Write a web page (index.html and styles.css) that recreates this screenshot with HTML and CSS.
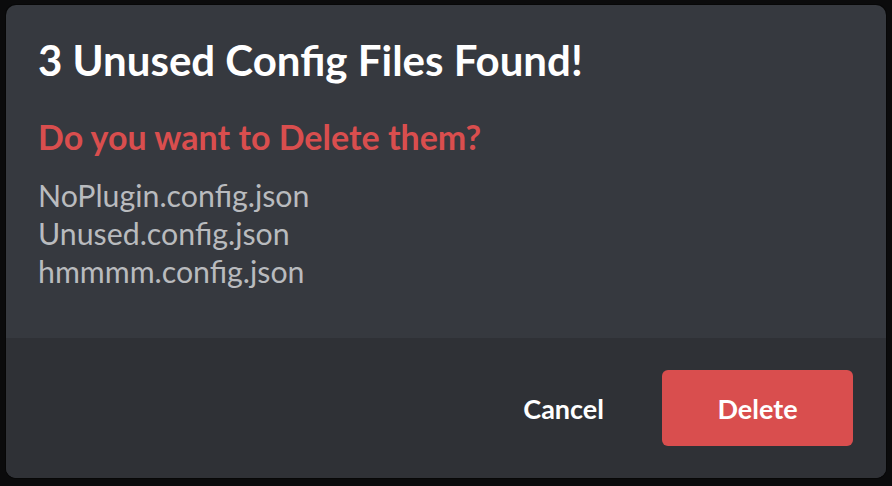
FILE: index.html
```html
<!DOCTYPE html>
<html lang="en">
<head>
<meta charset="utf-8">
<title>Unused Config Files</title>
<link rel="stylesheet" href="styles.css">
</head>
<body>
<div class="modal">
  <div class="modal-body">
    <h2 class="title">3 Unused Config Files Found!</h2>
    <p class="warning">Do you want to Delete them?</p>
    <ul class="files">
      <li>NoPlugin.config.json</li>
      <li>Unused.config.json</li>
      <li>hmmmm.config.json</li>
    </ul>
  </div>
  <div class="modal-footer">
    <button class="btn btn-cancel">Cancel</button>
    <button class="btn btn-delete">Delete</button>
  </div>
</div>
</body>
</html>
```
FILE: styles.css
```css
html, body {
  margin: 0;
  padding: 0;
  background: #0b0b0c;
  width: 892px;
  height: 486px;
  overflow: hidden;
  font-family: Lato, "Open Sans", sans-serif;
}
.modal {
  margin: 5px 0 0 6px;
  width: 880px;
  height: 473px;
  background: #36393f;
  border-radius: 10px;
  box-shadow: 0 0 0 1px rgba(0,0,0,0.35);
  display: flex;
  flex-direction: column;
  overflow: hidden;
}
.modal-body {
  flex: 1;
  padding: 30px 32px 0;
}
.title {
  margin: 0;
  font-size: 42px;
  line-height: 50px;
  font-weight: 700;
  color: #ffffff;
}
.warning {
  margin: 32px 0 0;
  font-size: 34px;
  line-height: 40px;
  font-weight: 700;
  color: #d94e4e;
}
.files {
  list-style: none;
  margin: 19px 0 0;
  padding: 0;
  font-size: 30.3px;
  line-height: 38px;
  color: #b9bbbe;
}
.modal-footer {
  height: 140px;
  box-sizing: border-box;
  padding: 32px 33px 32px 32px;
  background: #2f3136;
  display: flex;
  justify-content: flex-end;
  align-items: center;
  gap: 33px;
}
.btn {
  border: none;
  height: 76px;
  font-family: Lato, "Open Sans", sans-serif;
  font-size: 27px;
  font-weight: 700;
  color: #ffffff;
  border-radius: 6px;
  cursor: pointer;
}
.btn-cancel {
  background: transparent;
  padding: 0 25px;
}
.btn-delete {
  background: #d94e4e;
  width: 191px;
  padding: 0;
}
```
